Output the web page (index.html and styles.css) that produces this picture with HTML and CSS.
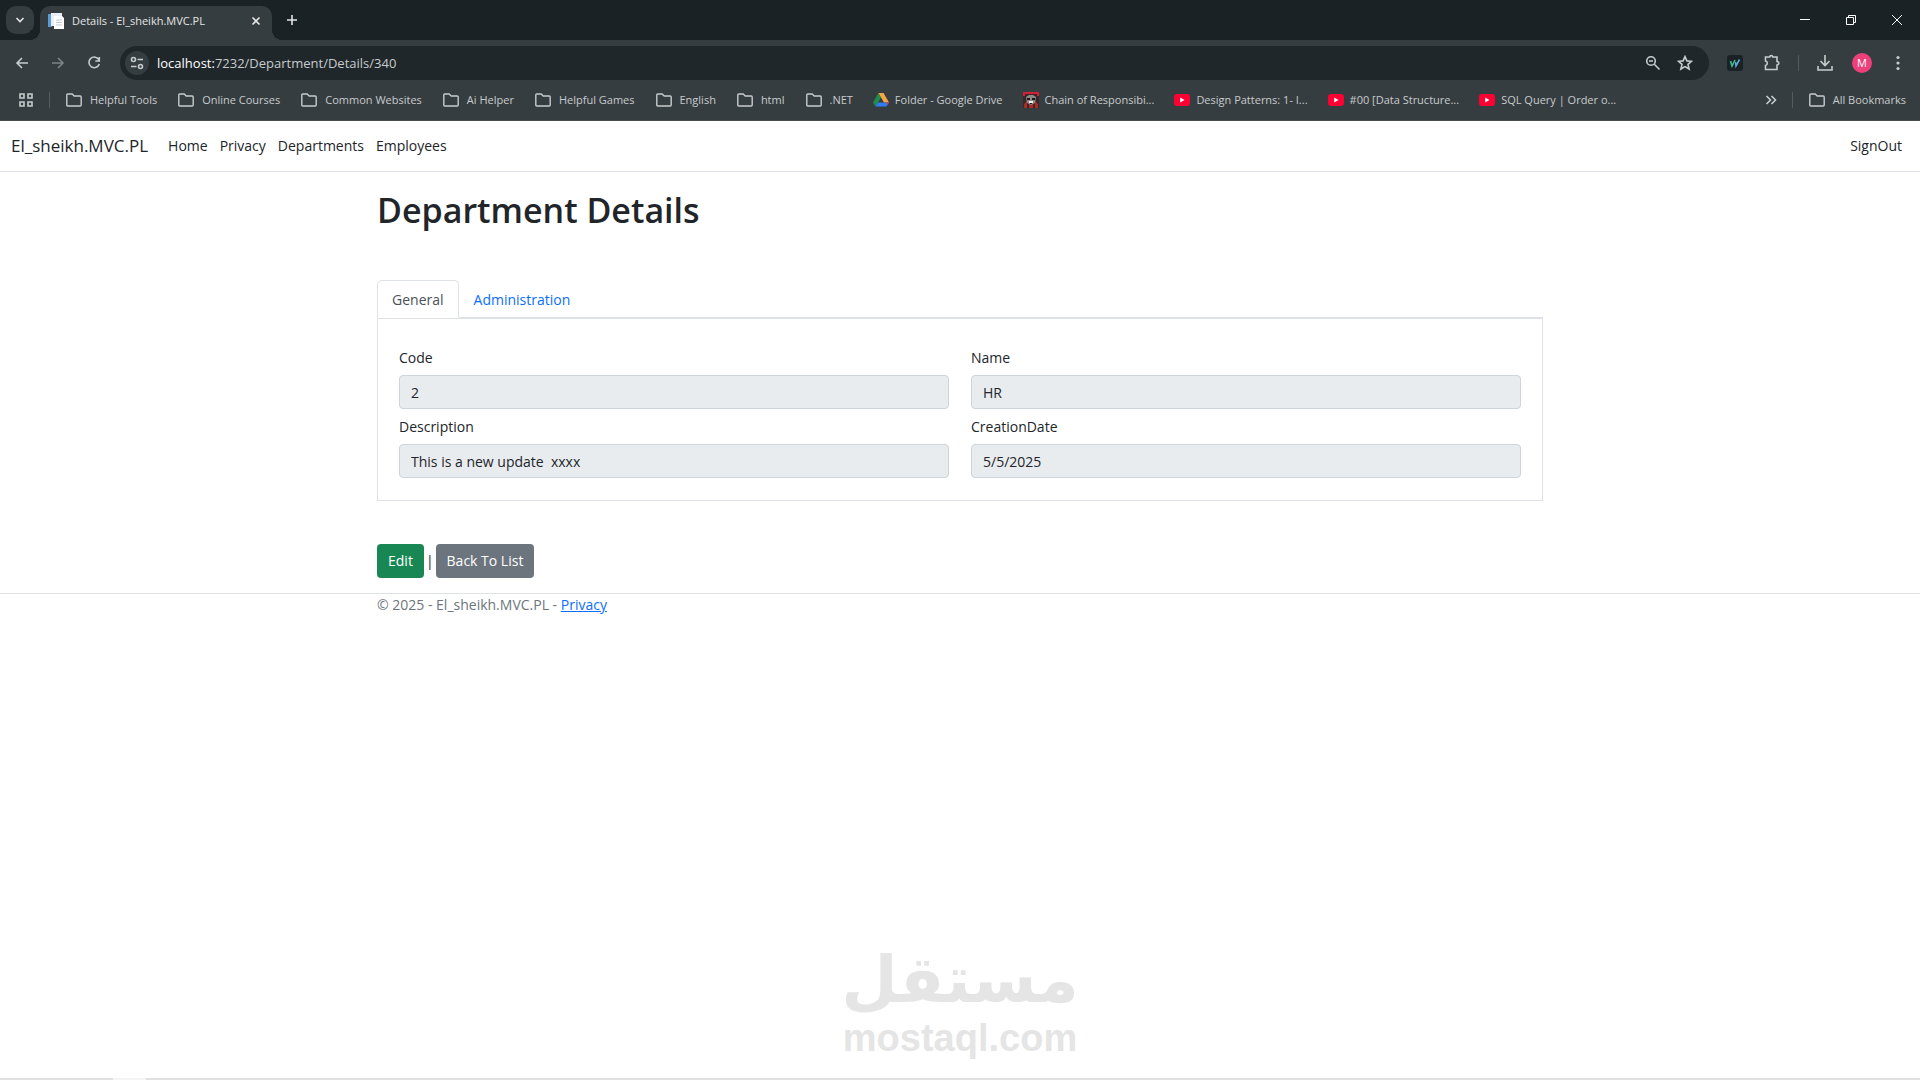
FILE: index.html
```html
<!DOCTYPE html>
<html lang="en">
<head>
    <meta charset="utf-8">
    <title>Details - El_sheikh.MVC.PL</title>
    <meta name="viewport" content="width=device-width, initial-scale=1.0">
    <link rel="stylesheet" href="styles.css">
</head>
<body>
    <svg class="defs" width="0" height="0">
        <symbol id="folder" viewBox="0 0 18 16"><path d="M1.800 13V3q0-1 1-1h4.400l2 2h6q1 0 1 1v8q0 1-1 1H2.800q-1 0-1-1z" fill="none" stroke="currentColor" stroke-width="1.4"/></symbol>
        <symbol id="youtube" viewBox="0 0 16 16"><rect y="2" width="16" height="12" rx="3" fill="#ff0033"/><path d="M6.200 5.500v5l4.300-2.500z" fill="#fff"/></symbol>
    </svg>

    <div class="browser">
        <div class="tabstrip">
            <button class="tab-search" aria-label="Search tabs"><svg width="12" height="12" viewBox="0 0 12 12"><path d="M2.500 4l3.500 3.500L9.500 4"/></svg></button>
            <div class="tab">
                <svg class="favicon" width="16" height="16" viewBox="0 0 16 16"><path d="M0 1h4v13H0z" fill="#5b9bd5"/><path d="M3 0h11v13H3z" fill="#e9eef3"/><path d="M6 3h8l2 2v11H6z" fill="#fff"/><path d="M8 7h6M8 9.500h6M8 12h6" stroke="#c3c8cc"/></svg>
                <span class="tab-title">Details - El_sheikh.MVC.PL</span>
                <button class="tab-close" aria-label="Close tab"><svg width="10" height="10" viewBox="0 0 10 10"><path d="M1.500 1.500l7 7M8.500 1.500l-7 7"/></svg></button>
            </div>
            <button class="new-tab" aria-label="New tab"><svg width="12" height="12" viewBox="0 0 12 12"><path d="M6 1v10M1 6h10"/></svg></button>
            <div class="window-buttons">
                <button aria-label="Minimize"><svg width="12" height="12" viewBox="0 0 12 12"><path d="M1 5.500h10"/></svg></button>
                <button aria-label="Restore"><svg width="12" height="12" viewBox="0 0 12 12"><path d="M1.500 3.500h7v7h-7zM3.500 3.500v-2h7v7h-2"/></svg></button>
                <button aria-label="Close"><svg width="12" height="12" viewBox="0 0 12 12"><path d="M1 1l10 10M11 1L1 11"/></svg></button>
            </div>
        </div>

        <div class="toolbar">
            <button aria-label="Back"><svg width="16" height="16" viewBox="0 0 16 16"><path d="M14 8H3M8 3L3 8l5 5"/></svg></button>
            <button class="dim" aria-label="Forward"><svg width="16" height="16" viewBox="0 0 16 16"><path d="M2 8h11M8 3l5 5-5 5"/></svg></button>
            <button aria-label="Reload"><svg width="16" height="16" viewBox="0 0 16 16"><path d="M13 5A5.300 5.300 0 1 0 13.300 9M13.300 2v4h-4"/></svg></button>
            <div class="address">
                <button class="site-info" aria-label="Site information"><svg width="16" height="16" viewBox="0 0 16 16"><circle cx="4.500" cy="4.500" r="2"/><path d="M8.500 4.500H14M2 11.500h5.500"/><circle cx="11.500" cy="11.500" r="2"/></svg></button>
                <span class="url"><b>localhost:</b>7232/Department/Details/340</span>
                <button aria-label="Zoom"><svg width="16" height="16" viewBox="0 0 16 16"><circle cx="6" cy="6" r="4.300"/><path d="M9.300 9.300l5.200 5.200M4 6h4"/></svg></button>
                <button aria-label="Bookmark this tab"><svg width="16" height="16" viewBox="0 0 16 16"><path d="M8 1.600l1.900 4.300 4.600.4-3.500 3.100 1.100 4.600L8 11.600 3.900 14 5 9.400 1.500 6.300l4.600-.4z"/></svg></button>
            </div>
            <button aria-label="Extension"><svg width="16" height="16" viewBox="0 0 16 16"><rect width="16" height="16" rx="3" fill="#1a2225" stroke="none"/><path d="M3.500 6l1.500 5L8 5" stroke="#3fb88f"/><path d="M8.500 7l.5 4L12.500 4.500" stroke="#58a9d8"/></svg></button>
            <button aria-label="Extensions"><svg width="18" height="18" viewBox="0 0 18 18"><path d="M2.500 3h4.200a1.500 1.500 0 0 1 3 0H14v4.500a1.500 1.500 0 0 1 0 3.500v4.500H2.500V11.500a2.300 2.300 0 0 0 0-4.500z"/></svg></button>
            <span class="divider"></span>
            <button aria-label="Downloads"><svg width="18" height="18" viewBox="0 0 18 18"><path d="M9 1v10M4.500 7L9 11.500 13.500 7M2 12v4h14v-4"/></svg></button>
            <button class="avatar" aria-label="Profile">M</button>
            <button aria-label="Menu"><svg width="16" height="16" viewBox="0 0 16 16"><g class="solid"><circle cx="8" cy="2.500" r="1.600"/><circle cx="8" cy="8" r="1.600"/><circle cx="8" cy="13.500" r="1.600"/></g></svg></button>
        </div>

        <div class="bookmarks">
            <button class="apps" aria-label="Apps"><svg width="16" height="16" viewBox="0 0 16 16"><path d="M2 2h4v4H2zM10 2h4v4h-4zM2 10h4v4H2zM10 10h4v4h-4z"/></svg></button>
            <span class="divider"></span>
            <a class="folder" href="#"><svg width="18" height="16"><use href="#folder"/></svg>Helpful Tools</a>
            <a class="folder" href="#"><svg width="18" height="16"><use href="#folder"/></svg>Online Courses</a>
            <a class="folder" href="#"><svg width="18" height="16"><use href="#folder"/></svg>Common Websites</a>
            <a class="folder" href="#"><svg width="18" height="16"><use href="#folder"/></svg>Ai Helper</a>
            <a class="folder" href="#"><svg width="18" height="16"><use href="#folder"/></svg>Helpful Games</a>
            <a class="folder" href="#"><svg width="18" height="16"><use href="#folder"/></svg>English</a>
            <a class="folder" href="#"><svg width="18" height="16"><use href="#folder"/></svg>html</a>
            <a class="folder" href="#"><svg width="18" height="16"><use href="#folder"/></svg>.NET</a>
            <a href="#"><svg width="16" height="16" viewBox="0 0 16 16"><path d="M5.500 1L0 10.500l2.500 4 5.500-9z" fill="#1e8e4e"/><path d="M5.500 1h5L16 10.500h-5z" fill="#f5a742"/><path d="M5 10.500h11l-2.500 4h-11z" fill="#2f7df6"/><path d="M13 10.500h3l-1.500 2.500z" fill="#e8303a"/></svg>Folder - Google Drive</a>
            <a href="#"><svg width="16" height="16" viewBox="0 0 16 16"><path d="M0 0h16v16H0z" fill="#3c2528"/><path d="M1 4V1h14v3" fill="none" stroke="#d3203a" stroke-width="2"/><path d="M1 12l3-3v7H1zM12 9l3 3v4h-3zM6 12h4v4H6z" fill="#a82d22"/><path d="M3 5l3-2h4l3 2-1 6-4 2-4-2z" fill="#8b8889"/><path d="M4 6h3v2H4zM9 6h3v2H9zM7 11h2v1H7z" fill="#1c1718"/><path d="M6 9h4v2H6z" fill="#f2eded"/></svg>Chain of Responsibi...</a>
            <a href="#"><svg width="16" height="16"><use href="#youtube"/></svg>Design Patterns: 1- I...</a>
            <a href="#"><svg width="16" height="16"><use href="#youtube"/></svg>#00 [Data Structure...</a>
            <a href="#"><svg width="16" height="16"><use href="#youtube"/></svg>SQL Query | Order o...</a>
            <button class="more" aria-label="More bookmarks"><svg width="12" height="12" viewBox="0 0 12 12"><path d="M1.500 2L5.500 6l-4 4M6.500 2l4 4-4 4"/></svg></button>
            <span class="divider"></span>
            <a class="folder" href="#"><svg width="18" height="16"><use href="#folder"/></svg>All Bookmarks</a>
        </div>
    </div>

    <header>
        <nav class="navbar">
            <a class="brand" href="#">El_sheikh.MVC.PL</a>
            <a href="#">Home</a>
            <a href="#">Privacy</a>
            <a href="#">Departments</a>
            <a href="#">Employees</a>
            <a class="signout" href="#">SignOut</a>
        </nav>
    </header>

    <main class="container">
        <h1>Department Details</h1>
        <div class="nav-tabs" role="tablist">
            <button class="nav-link active" role="tab" aria-selected="true">General</button>
            <button class="nav-link" role="tab" aria-selected="false">Administration</button>
        </div>
        <div class="tab-content">
            <div class="field">
                <label for="code">Code</label>
                <input id="code" type="text" value="2" readonly>
            </div>
            <div class="field">
                <label for="name">Name</label>
                <input id="name" type="text" value="HR" readonly>
            </div>
            <div class="field">
                <label for="description">Description</label>
                <input id="description" type="text" value="This is a new update  xxxx" readonly>
            </div>
            <div class="field">
                <label for="creationDate">CreationDate</label>
                <input id="creationDate" type="text" value="5/5/2025" readonly>
            </div>
        </div>
        <div class="actions">
            <a class="btn btn-success" href="#">Edit</a>
            <span>|</span>
            <a class="btn btn-secondary" href="#">Back To List</a>
        </div>
    </main>

    <footer class="footer">
        <div class="container">&copy; 2025 - El_sheikh.MVC.PL - <a href="#">Privacy</a></div>
    </footer>

    <div class="watermark">
        <div class="mark-ar" lang="ar" dir="rtl">مستقل</div>
        <div class="mark-en">mostaql.com</div>
    </div>
    <div class="taskbar-edge"><span></span></div>
</body>
</html>
```
FILE: styles.css
```css
* {
    box-sizing: border-box;
}
body {
    margin: 0;
    min-height: 100vh;
    display: flex;
    flex-direction: column;
    font-family: "Open Sans", "Noto Sans", sans-serif;
    font-size: 14px;
    line-height: 22px;
    color: #212529;
    background: #fff;
}
a {
    color: inherit;
    text-decoration: none;
}
button {
    padding: 0;
    border: none;
    background: none;
    color: inherit;
    font: inherit;
    cursor: pointer;
}
.defs {
    position: absolute;
}

/* browser window */
.browser {
    background: #363d40;
    color: #c7cbcd;
    font-size: 11px;
    line-height: 16px;
    border-bottom: 1px solid #4a4d4d;
}
.browser button {
    display: flex;
    align-items: center;
    justify-content: center;
    flex: none;
}
.browser button svg {
    fill: none;
    stroke: currentColor;
    stroke-width: 1.6;
}
.browser .solid {
    fill: currentColor;
    stroke: none;
}
.tabstrip {
    display: flex;
    align-items: center;
    height: 40px;
    padding-left: 6px;
    background: #1a2225;
    color: #e3e5e6;
}
.browser .tab-search {
    width: 28px;
    height: 28px;
    border-radius: 10px;
    background: #363d40;
}
.tab {
    position: relative;
    display: flex;
    align-items: center;
    align-self: flex-end;
    width: 232px;
    height: 34px;
    margin-left: 6px;
    padding: 0 11px 4px 8px;
    border-radius: 10px 10px 0 0;
    background: #363d40;
}
.tab::before,
.tab::after {
    content: "";
    position: absolute;
    bottom: 0;
    width: 10px;
    height: 10px;
}
.tab::before {
    left: -10px;
    background: radial-gradient(circle at 0 0, #1a2225 10px, #363d40 10px);
}
.tab::after {
    right: -10px;
    background: radial-gradient(circle at 100% 0, #1a2225 10px, #363d40 10px);
}
.tab-title {
    flex: 1;
    margin-left: 8px;
}
.new-tab {
    margin-left: 14px;
}
.window-buttons {
    display: flex;
    margin-left: auto;
}
.window-buttons button {
    width: 46px;
    height: 40px;
    color: #fff;
}
.browser .window-buttons svg {
    stroke-width: 1;
}
.toolbar {
    display: flex;
    align-items: center;
    gap: 20px;
    height: 46px;
    padding: 0 14px;
}
.toolbar .divider {
    margin: 0 -3px;
}
.toolbar .dim {
    color: #7d8386;
}
.address {
    display: flex;
    align-items: center;
    gap: 16px;
    flex: 1;
    height: 34px;
    margin: 0 -2px;
    padding: 0 16px 0 5px;
    border-radius: 17px;
    background: #1f272a;
}
.address .site-info {
    width: 24px;
    height: 24px;
    border-radius: 12px;
    background: #363d40;
}
.url {
    flex: 1;
    margin-left: -8px;
    font-size: 13px;
    line-height: 20px;
}
.url b {
    color: #fff;
    font-weight: normal;
}
.divider {
    width: 1px;
    height: 16px;
    background: #555b5d;
}
.toolbar .avatar {
    width: 20px;
    height: 20px;
    margin: 0 -2px;
    border-radius: 10px;
    background: #ec407a;
    color: #fff;
}
.bookmarks {
    display: flex;
    align-items: center;
    gap: 20px;
    height: 34px;
    padding: 0 14px 6px 18px;
    white-space: nowrap;
}
.bookmarks .divider {
    margin: 0 -5px;
}
.bookmarks a {
    display: flex;
    align-items: center;
    gap: 6px;
}
.bookmarks .folder {
    gap: 7px;
}
.more {
    margin-left: auto;
}

/* page */
.navbar {
    display: flex;
    align-items: center;
    gap: 12px;
    height: 51px;
    padding: 0 18px 0 11px;
    border-bottom: 1px solid #dee2e6;
}
.brand {
    margin-right: 8px;
    font-size: 17px;
}
.signout {
    margin-left: auto;
}
.container {
    width: 100%;
    max-width: 1188px;
    margin: 0 auto;
    padding: 0 11px;
}
main.container {
    padding-bottom: 15px;
}
h1 {
    margin: 16px 0 48px;
    font-size: 34px;
    font-weight: 600;
    line-height: 44px;
}
.nav-tabs {
    display: flex;
    border-bottom: 1px solid #dee2e6;
}
.nav-link {
    height: 38px;
    margin-bottom: -1px;
    padding: 2px 14px 0;
    border: 1px solid transparent;
    border-radius: 5px 5px 0 0;
    color: #0d6efd;
}
.nav-link.active {
    border-color: #dee2e6 #dee2e6 #fff;
    color: #495057;
    background: #fff;
}
.tab-content {
    display: grid;
    grid-template-columns: 1fr 1fr;
    gap: 7px 22px;
    padding: 28px 21px 22px;
    border: 1px solid #dee2e6;
}
.field label {
    display: block;
    margin-bottom: 6px;
}
.field input {
    display: block;
    width: 100%;
    height: 34px;
    padding: 0 11px;
    border: 1px solid #ced4da;
    border-radius: 4px;
    background: #e9ecef;
    color: #212529;
    font: inherit;
}
.actions {
    display: flex;
    align-items: center;
    gap: 2px;
    margin-top: 43px;
}
.btn {
    padding: 6px 11px;
    border-radius: 4px;
    color: #fff;
}
.btn-success {
    background: #198754;
}
.btn-secondary {
    background: #6c757d;
}
.footer {
    border-top: 1px solid #dee2e6;
    color: #6c757d;
}
.footer a {
    color: #0d6efd;
    text-decoration: underline;
}

/* watermark */
.watermark {
    margin-top: auto;
    color: #e5e5e5;
    font-weight: bold;
    text-align: center;
}
.mark-ar {
    font-family: "DejaVu Sans", sans-serif;
    font-size: 65px;
    line-height: 76px;
}
.mark-en {
    margin-bottom: 20px;
    font-family: "Liberation Sans", sans-serif;
    font-size: 38px;
    line-height: 40px;
}
.taskbar-edge {
    height: 2px;
    padding-left: 113px;
    background: #e0e0e0;
}
.taskbar-edge span {
    display: block;
    width: 33px;
    height: 2px;
    background: #f5f5f5;
}
```
